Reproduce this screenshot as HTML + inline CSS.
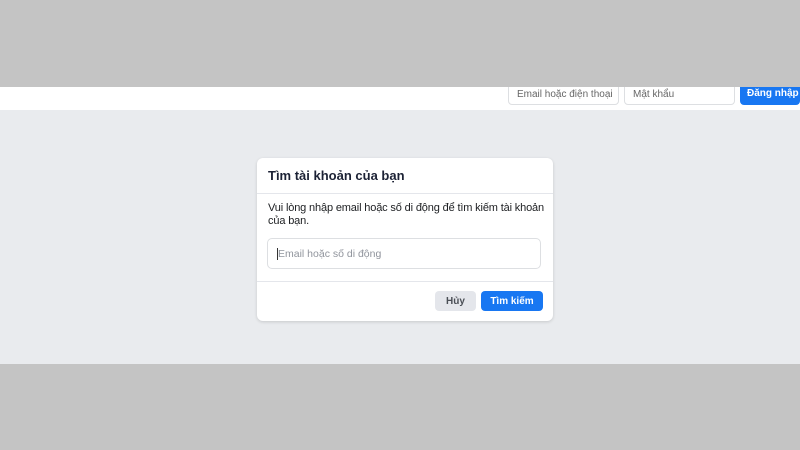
<!DOCTYPE html>
<html><head><meta charset="utf-8"><style>
*{margin:0;padding:0;box-sizing:border-box}
body{width:800px;height:450px;position:relative;overflow:hidden;background:#c4c4c4;font-family:"Liberation Sans",Arial,sans-serif}
.a{position:absolute}
</style></head><body>
<div class="a" style="left:0;top:87px;width:800px;height:23px;background:#fff;box-shadow:0 1px 2px rgba(0,0,0,.12)"></div>
<div class="a" style="left:0;top:110px;width:800px;height:254px;background:#e9ebee"></div>
<div class="a" style="left:508px;top:78px;width:111px;height:27px;background:#fff;border:1px solid #dddfe2;border-radius:4px;font-size:10px;color:#666;padding:10px 0 0 8px">Email hoặc điện thoại</div>
<div class="a" style="left:624px;top:78px;width:111px;height:27px;background:#fff;border:1px solid #dddfe2;border-radius:4px;font-size:10px;color:#666;padding:10px 0 0 8px">Mật khẩu</div>
<div class="a" style="left:740px;top:78px;width:60px;height:27px;background:#1877f2;border-radius:4px;font-size:10px;color:#fff;font-weight:bold;padding:10px 0 0 7px">Đăng nhập</div>
<div class="a" style="left:0;top:0;width:800px;height:87px;background:#c4c4c4"></div>
<div class="a" style="left:257px;top:158px;width:296px;height:163px;background:#fff;border-radius:6px;box-shadow:0 1px 3px rgba(0,0,0,.15)">
<div class="a" style="left:11px;top:10px;font-size:13px;font-weight:bold;color:#1c2235">Tìm tài khoản của bạn</div>
<div class="a" style="left:0;top:35px;width:296px;height:1px;background:#e4e6eb"></div>
<div class="a" style="left:11px;top:44px;width:285px;font-size:11px;letter-spacing:-0.15px;line-height:13px;color:#1c1e21">Vui lòng nhập email hoặc số di động để tìm kiếm tài khoản của bạn.</div>
<div class="a" style="left:10px;top:80px;width:274px;height:31px;border:1px solid #dddfe2;border-radius:5px;font-size:10.5px;color:#90949c;padding:9px 0 0 9px"><span style="border-left:1px solid #333;padding-left:0">Email hoặc số di động</span></div>
<div class="a" style="left:0;top:123px;width:296px;height:1px;background:#e4e6eb"></div>
<div class="a" style="left:178px;top:133px;width:41px;height:20px;background:#e4e6eb;border-radius:4px;font-size:10px;font-weight:bold;color:#4b4f56;text-align:center;line-height:21px">Hủy</div>
<div class="a" style="left:224px;top:133px;width:62px;height:20px;background:#1877f2;border-radius:4px;font-size:10px;font-weight:bold;color:#fff;text-align:center;line-height:21px">Tìm kiếm</div>
</div>
</body></html>
